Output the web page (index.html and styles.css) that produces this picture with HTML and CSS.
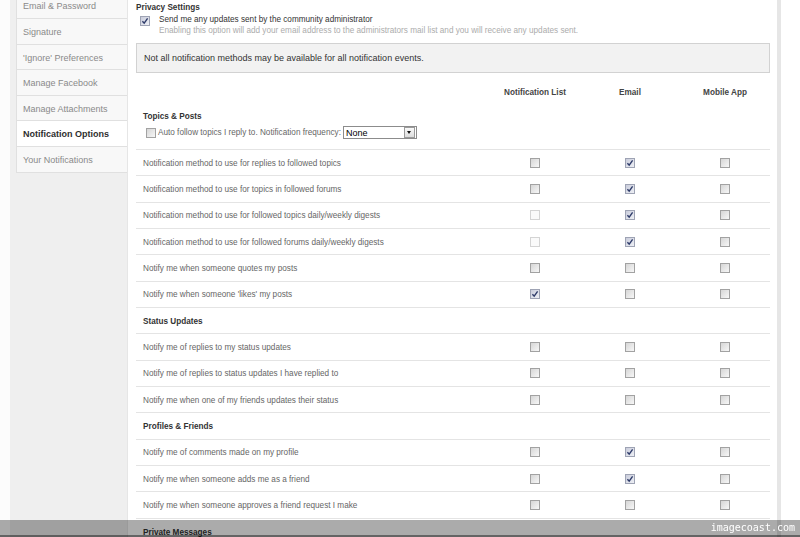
FILE: index.html
```html
<!DOCTYPE html>
<html>
<head>
<meta charset="utf-8">
<link rel="stylesheet" href="styles.css">
</head>
<body>
<div class="page">
  <div class="gutter"></div>
  <aside class="sidebar">
    <ul class="menu">
      <li class="item">Email &amp; Password</li>
      <li class="item">Signature</li>
      <li class="item">'Ignore' Preferences</li>
      <li class="item">Manage Facebook</li>
      <li class="item">Manage Attachments</li>
      <li class="item active">Notification Options</li>
      <li class="item">Your Notifications</li>
    </ul>
  </aside>
  <main class="main">
    <div class="privacy-title">Privacy Settings</div>
    <div class="privacy-opt">
      <span class="cb checked top-cb"><svg viewBox="0 0 8 8"><path d="M1.4 4.2 L3.2 6.2 L6.6 1.4"/></svg></span>
      <div class="privacy-text">
        <div class="opt-label">Send me any updates sent by the community administrator</div>
        <div class="opt-desc">Enabling this option will add your email address to the administrators mail list and you will receive any updates sent.</div>
      </div>
    </div>
    <div class="notice">Not all notification methods may be available for all notification events.</div>

    <div class="grid thead">
      <div></div>
      <div class="c">Notification List</div>
      <div class="c">Email</div>
      <div class="c">Mobile App</div>
    </div>

    <div class="topics">
      <div class="sec-title">Topics &amp; Posts</div>
      <div class="auto-row">
        <span class="cb"></span>
        <span class="auto-text">Auto follow topics I reply to. Notification frequency:</span>
        <span class="select"><span class="sel-val">None</span><span class="sel-btn"><span class="tri"></span></span></span>
      </div>
    </div>

    <div class="grid row"><div class="lbl">Notification method to use for replies to followed topics</div><div class="c"><span class="cb"></span></div><div class="c"><span class="cb checked"><svg viewBox="0 0 8 8"><path d="M1.4 4.2 L3.2 6.2 L6.6 1.4"/></svg></span></div><div class="c"><span class="cb"></span></div></div>
    <div class="grid row"><div class="lbl">Notification method to use for topics in followed forums</div><div class="c"><span class="cb"></span></div><div class="c"><span class="cb checked"><svg viewBox="0 0 8 8"><path d="M1.4 4.2 L3.2 6.2 L6.6 1.4"/></svg></span></div><div class="c"><span class="cb"></span></div></div>
    <div class="grid row"><div class="lbl">Notification method to use for followed topics daily/weekly digests</div><div class="c"><span class="cb disabled"></span></div><div class="c"><span class="cb checked"><svg viewBox="0 0 8 8"><path d="M1.4 4.2 L3.2 6.2 L6.6 1.4"/></svg></span></div><div class="c"><span class="cb"></span></div></div>
    <div class="grid row"><div class="lbl">Notification method to use for followed forums daily/weekly digests</div><div class="c"><span class="cb disabled"></span></div><div class="c"><span class="cb checked"><svg viewBox="0 0 8 8"><path d="M1.4 4.2 L3.2 6.2 L6.6 1.4"/></svg></span></div><div class="c"><span class="cb"></span></div></div>
    <div class="grid row"><div class="lbl">Notify me when someone quotes my posts</div><div class="c"><span class="cb"></span></div><div class="c"><span class="cb"></span></div><div class="c"><span class="cb"></span></div></div>
    <div class="grid row"><div class="lbl">Notify me when someone 'likes' my posts</div><div class="c"><span class="cb checked"><svg viewBox="0 0 8 8"><path d="M1.4 4.2 L3.2 6.2 L6.6 1.4"/></svg></span></div><div class="c"><span class="cb"></span></div><div class="c"><span class="cb"></span></div></div>

    <div class="row sec-row">Status Updates</div>
    <div class="grid row"><div class="lbl">Notify me of replies to my status updates</div><div class="c"><span class="cb"></span></div><div class="c"><span class="cb"></span></div><div class="c"><span class="cb"></span></div></div>
    <div class="grid row"><div class="lbl">Notify me of replies to status updates I have replied to</div><div class="c"><span class="cb"></span></div><div class="c"><span class="cb"></span></div><div class="c"><span class="cb"></span></div></div>
    <div class="grid row"><div class="lbl">Notify me when one of my friends updates their status</div><div class="c"><span class="cb"></span></div><div class="c"><span class="cb"></span></div><div class="c"><span class="cb"></span></div></div>

    <div class="row sec-row">Profiles &amp; Friends</div>
    <div class="grid row"><div class="lbl">Notify me of comments made on my profile</div><div class="c"><span class="cb"></span></div><div class="c"><span class="cb checked"><svg viewBox="0 0 8 8"><path d="M1.4 4.2 L3.2 6.2 L6.6 1.4"/></svg></span></div><div class="c"><span class="cb"></span></div></div>
    <div class="grid row"><div class="lbl">Notify me when someone adds me as a friend</div><div class="c"><span class="cb"></span></div><div class="c"><span class="cb checked"><svg viewBox="0 0 8 8"><path d="M1.4 4.2 L3.2 6.2 L6.6 1.4"/></svg></span></div><div class="c"><span class="cb"></span></div></div>
    <div class="grid row"><div class="lbl">Notify me when someone approves a friend request I make</div><div class="c"><span class="cb"></span></div><div class="c"><span class="cb"></span></div><div class="c"><span class="cb"></span></div></div>

    <div class="row sec-row last">Private Messages</div>
  </main>
  <div class="strip"></div>
  <div class="rest"></div>
</div>
<div class="watermark">imagecoast.com</div>
</body>
</html>
```

FILE: styles.css
```css
html, body {
  margin: 0;
  padding: 0;
  background: #fff;
}
body {
  font-family: "Liberation Sans", Arial, sans-serif;
  color: #333;
  overflow: hidden;
  height: 537px;
}
.page {
  display: flex;
  align-items: stretch;
  min-height: 537px;
}
.gutter {
  width: 10px;
  flex: none;
  background: #fcfcfc;
}
.sidebar {
  width: 112px;
  flex: none;
  padding-left: 6px;
  background: #efefef;
}
.menu {
  list-style: none;
  margin: -6.6px 0 0 0;
  padding: 0;
}
.item {
  box-sizing: border-box;
  height: 25.6px;
  line-height: 24.6px;
  padding: 1px 0 0 6px;
  font-size: 9px;
  color: #8a8a8a;
  background: #f8f8f8;
  border-left: 1px solid #e0e0e0;
  border-right: 1px solid #e0e0e0;
  border-bottom: 1px solid #e0e0e0;
  white-space: nowrap;
}
.item.active {
  background: #fff;
  color: #2e2e2e;
  font-weight: bold;
}
.main {
  width: 634px;
  flex: none;
  padding: 1px 7px 0 8px;
  background: #fff;
  border-left: 1px solid #e6e6e6;
  margin-left: -1px;
}
.strip {
  width: 4px;
  flex: none;
  background: #e6e6e6;
}
.rest {
  flex: 1;
  background: #fff;
}
.privacy-title {
  font-size: 8.2px;
  font-weight: bold;
  line-height: 13px;
  color: #333;
}
.privacy-opt {
  margin-top: 0;
  display: flex;
  align-items: flex-start;
}
.top-cb {
  margin: 2px 9px 0 4px;
}
.opt-label {
  font-size: 8.2px;
  line-height: 11px;
  color: #333;
}
.opt-desc {
  font-size: 8.2px;
  line-height: 11px;
  color: #acacac;
}
.notice {
  margin-top: 7px;
  box-sizing: border-box;
  height: 30px;
  line-height: 29px;
  border: 1px solid #d2d2d2;
  background: #f2f2f2;
  padding-left: 7px;
  font-size: 9px;
  color: #333;
}
.grid {
  display: grid;
  grid-template-columns: 1fr 95px 95px 95px;
  align-items: center;
}
.c {
  display: flex;
  justify-content: center;
  padding-left: 5px;
}
.thead {
  margin-top: 14px;
  height: 12px;
  line-height: 12px;
  font-size: 8.2px;
  font-weight: bold;
  color: #444;
}
.topics {
  padding: 12px 0 9px 7px;
  border-bottom: 1px solid #e4e4e4;
}
.sec-title {
  font-size: 8.2px;
  font-weight: bold;
  line-height: 12px;
  color: #333;
}
.auto-row {
  margin-top: 2px;
  height: 15px;
  display: flex;
  align-items: center;
  padding-left: 3px;
}
.auto-text {
  margin-left: 2px;
  font-size: 8.2px;
  color: #666;
}
.select {
  margin-left: 2px;
  box-sizing: border-box;
  width: 74px;
  height: 13px;
  border: 1px solid #8c8c8c;
  background: #fff;
  display: flex;
  align-items: center;
  justify-content: space-between;
}
.sel-val {
  padding-left: 2px;
  font-size: 9px;
  color: #000;
}
.sel-btn {
  box-sizing: border-box;
  width: 11px;
  height: 11px;
  margin-right: 1px;
  border: 1px solid #9a9a9a;
  background: linear-gradient(#fafafa, #dcdcdc);
  display: flex;
  align-items: center;
  justify-content: center;
}
.tri {
  width: 0;
  height: 0;
  border-left: 2.5px solid transparent;
  border-right: 2.5px solid transparent;
  border-top: 3px solid #111;
}
.row {
  box-sizing: border-box;
  height: 26.33px;
  border-bottom: 1px solid #e4e4e4;
}
.lbl {
  padding: 1px 0 0 7px;
  font-size: 8.2px;
  color: #666;
  white-space: nowrap;
}
.sec-row {
  display: flex;
  align-items: center;
  padding: 1px 0 0 7px;
  font-size: 8.2px;
  font-weight: bold;
  color: #333;
}
.sec-row.last {
  border-bottom: none;
}
.cb {
  box-sizing: border-box;
  width: 10px;
  height: 10px;
  flex: none;
  display: inline-flex;
  align-items: center;
  justify-content: center;
  border: 1px solid #a2a2a2;
  background: linear-gradient(135deg, #d6d6d6, #f7f7f7);
}
.cb.disabled {
  border-color: #d4d4d4;
  background: #fafafa;
}
.cb.checked {
  border-color: #9ea3b4;
  background: linear-gradient(135deg, #c9ccdb, #eef0f5);
}
.cb svg {
  width: 8px;
  height: 8px;
  display: block;
}
.cb svg path {
  fill: none;
  stroke: #2f3c6a;
  stroke-width: 1.4;
}
.watermark {
  position: fixed;
  left: 0;
  right: 0;
  bottom: 0;
  box-sizing: border-box;
  height: 17px;
  background: rgba(0, 0, 0, 0.33);
  border-bottom: 2px solid rgba(0, 0, 0, 0.42);
  text-align: right;
  padding-right: 5px;
  font-family: "DejaVu Sans Mono", "Liberation Mono", monospace;
  font-size: 10px;
  line-height: 15px;
  color: #fff;
}
```
